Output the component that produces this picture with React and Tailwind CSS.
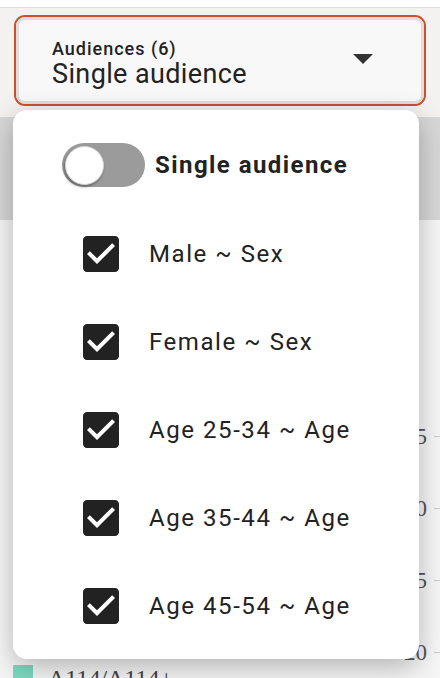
import React, { useState } from 'react';

const options = [
  { id: 'male', label: 'Male ~ Sex' },
  { id: 'female', label: 'Female ~ Sex' },
  { id: 'age2534', label: 'Age 25-34 ~ Age' },
  { id: 'age3544', label: 'Age 35-44 ~ Age' },
  { id: 'age4554', label: 'Age 45-54 ~ Age' },
];

const axisTicks = ['35', '30', '25', '20'];

const CheckBoxIcon = () => (
  <svg width="48" height="48" viewBox="0 0 24 24" className="shrink-0 fill-[#222222]">
    <path d="M19 3H5c-1.11 0-2 .9-2 2v14c0 1.1.89 2 2 2h14c1.11 0 2-.9 2-2V5c0-1.1-.89-2-2-2zm-9 14l-5-5 1.41-1.41L10 14.17l7.59-7.59L19 8l-9 9z" />
  </svg>
);

const App = () => {
  const [single, setSingle] = useState(false);
  const [checked, setChecked] = useState(options.map(o => o.id));

  const toggle = (id) => {
    setChecked(prev => prev.includes(id) ? prev.filter(x => x !== id) : [...prev, id]);
  };

  return (
    <div className="relative flex h-[678px] w-[440px] flex-col overflow-hidden bg-[#f6f6f6] font-['Roboto',sans-serif] text-[#222222]">
      {/* top strip */}
      <div className="h-[8px] shrink-0 border-b border-[#dcdcdc] bg-white" />

      {/* select area */}
      <div className="h-[109px] shrink-0 bg-[#f3f2f1] px-[14px] pt-[7px]">
        <div className="rounded-[11px] border-2 border-[#cf4f2c]">
          <div className="flex h-[87px] items-center justify-between rounded-[9px] border-[3px] border-[#dedede] bg-[#f8f8f8] pl-[33px] pr-[48px]">
            <div className="flex flex-col pt-[6px]">
              <span className="text-[18px] font-medium leading-[20px] tracking-[0.055em]">Audiences (6)</span>
              <span className="text-[27px] leading-[30px] tracking-[0.014em]">Single audience</span>
            </div>
            <svg width="20" height="10" viewBox="0 0 20 10" className="mt-[-4px] fill-[#333333]">
              <path d="M0 0h20L10 10z" />
            </svg>
          </div>
        </div>
      </div>

      {/* table header band */}
      <div className="h-[103px] shrink-0 bg-[#d8d8d8]" />

      {/* chart area */}
      <div className="flex h-[445px] shrink-0 justify-end bg-[#f7f7f7]">
        <div className="flex shrink-0 flex-col pt-[180px]">
          {axisTicks.map(t => (
            <div key={t} className="flex h-[72px] shrink-0 items-center justify-end gap-[7px]">
              <span className="font-['Liberation_Serif',serif] text-[23px] leading-none text-[#555555]">{t}</span>
              <span className="h-px w-[6px] bg-[#cccccc]" />
            </div>
          ))}
        </div>
      </div>

      {/* legend */}
      <div className="flex items-start gap-[15px] pl-[13px]">
        <span className="h-[20px] w-[20px] bg-[#7fd9c1]" />
        <span className="mt-[1px] font-['Liberation_Serif',serif] text-[24px] leading-[24px] text-[#444444]">A114/A114+</span>
      </div>

      {/* dropdown menu */}
      <div className="absolute left-[13px] top-[110px] h-[549px] w-[406px] rounded-[14px] bg-white pt-[33px] shadow-[0_8px_28px_rgba(0,0,0,0.28)]">
        <div className="flex items-center pl-[49px]">
          <button
            type="button"
            onClick={() => setSingle(!single)}
            className={`flex h-[44px] w-[83px] items-center rounded-full px-[3px] ${single ? 'justify-end bg-[#222222]' : 'justify-start bg-[#9b9b9b]'}`}
          >
            <span className="h-[39px] w-[39px] rounded-full border border-[#d6d6d6] bg-white shadow-[-1px_2px_3px_rgba(0,0,0,0.35)]" />
          </button>
          <span className="ml-[10px] text-[24px] font-bold tracking-[0.06em]">Single audience</span>
        </div>

        <div className="mt-[23px] flex flex-col">
          {options.map(o => (
            <label key={o.id} className="flex h-[88px] cursor-pointer items-center pl-[64px]" onClick={() => toggle(o.id)}>
              {checked.includes(o.id) ? (
                <CheckBoxIcon />
              ) : (
                <span className="m-[6px] h-[36px] w-[36px] rounded-[4px] border-[4px] border-[#222222]" />
              )}
              <span className="ml-[24px] text-[24px] tracking-[0.065em]">{o.label}</span>
            </label>
          ))}
        </div>
      </div>
    </div>
  );
};

export default App;
